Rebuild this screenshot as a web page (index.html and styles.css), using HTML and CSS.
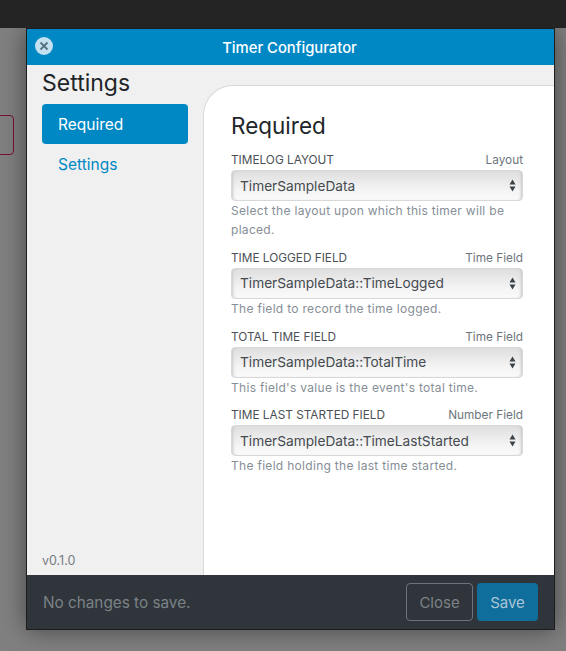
FILE: index.html
```html
<!DOCTYPE html>
<html>
    <head>
        <meta charset="UTF-8">
        <title>Timer Configurator</title>
        <link rel="stylesheet" href="styles.css">
    </head>
    <body>
        <div class="top-bar"></div>
        <div class="stage">
            <div class="ghost-button"></div>
            <div class="modal">
                <div class="modal-header">
                    <button class="close-x" aria-label="Close">
                        <svg width="10" height="10" viewBox="0 0 10 10"><path d="M1.5 1.5l7 7M8.5 1.5l-7 7" stroke="#55707f" stroke-width="1.8" fill="none"/></svg>
                    </button>
                    <span class="modal-title">Timer Configurator</span>
                </div>
                <div class="modal-body">
                    <div class="sidebar">
                        <h2>Settings</h2>
                        <a class="nav-item active">Required</a>
                        <a class="nav-item">Settings</a>
                        <div class="version">v0.1.0</div>
                    </div>
                    <div class="content">
                        <h3>Required</h3>

                        <div class="field">
                            <div class="field-label"><span>TIMELOG LAYOUT</span><span class="field-type">Layout</span></div>
                            <div class="select">TimerSampleData<svg class="arrows" width="7" height="13" viewBox="0 0 7 13"><path d="M3.5 0.5L6.5 5.5H0.5zM3.5 12.5L0.5 7.5H6.5z" fill="#3c4348"/></svg></div>
                            <div class="help">Select the layout upon which this timer will be placed.</div>
                        </div>

                        <div class="field">
                            <div class="field-label"><span>TIME LOGGED FIELD</span><span class="field-type">Time Field</span></div>
                            <div class="select">TimerSampleData::TimeLogged<svg class="arrows" width="7" height="13" viewBox="0 0 7 13"><path d="M3.5 0.5L6.5 5.5H0.5zM3.5 12.5L0.5 7.5H6.5z" fill="#3c4348"/></svg></div>
                            <div class="help">The field to record the time logged.</div>
                        </div>

                        <div class="field">
                            <div class="field-label"><span>TOTAL TIME FIELD</span><span class="field-type">Time Field</span></div>
                            <div class="select">TimerSampleData::TotalTime<svg class="arrows" width="7" height="13" viewBox="0 0 7 13"><path d="M3.5 0.5L6.5 5.5H0.5zM3.5 12.5L0.5 7.5H6.5z" fill="#3c4348"/></svg></div>
                            <div class="help">This field's value is the event's total time.</div>
                        </div>

                        <div class="field">
                            <div class="field-label"><span>TIME LAST STARTED FIELD</span><span class="field-type">Number Field</span></div>
                            <div class="select">TimerSampleData::TimeLastStarted<svg class="arrows" width="7" height="13" viewBox="0 0 7 13"><path d="M3.5 0.5L6.5 5.5H0.5zM3.5 12.5L0.5 7.5H6.5z" fill="#3c4348"/></svg></div>
                            <div class="help">The field holding the last time started.</div>
                        </div>
                    </div>
                </div>
                <div class="modal-footer">
                    <span class="status">No changes to save.</span>
                    <button class="btn btn-close">Close</button>
                    <button class="btn btn-save">Save</button>
                </div>
            </div>
        </div>
    </body>
</html>
```

FILE: styles.css
```css
html {
    width: 100%;
    height: 100%;
}

body {
    margin: 0;
    height: 651px;
    overflow: hidden;
    font-family: "Inter", "Liberation Sans", sans-serif;
    background: #808080;
    display: flex;
    flex-direction: column;
}

.top-bar {
    height: 28px;
    flex: none;
    background: #242424;
    position: relative;
    z-index: 1;
}

.stage {
    position: relative;
    flex: 1;
    padding: 1px 12px 0 27px;
}

.ghost-button {
    position: absolute;
    left: -20px;
    top: 87px;
    width: 32px;
    height: 38px;
    border: 1px solid #7a0f3c;
    border-radius: 4px;
}

.modal {
    position: relative;
    width: 527px;
    height: 600px;
    display: flex;
    flex-direction: column;
    outline: 1px solid #1d1d1d;
    box-shadow: 0 0 24px rgba(0, 0, 0, 0.5);
}

.modal-header {
    height: 36px;
    flex: none;
    background: #0088c5;
    display: flex;
    align-items: center;
    justify-content: center;
    position: relative;
}

.close-x {
    position: absolute;
    left: 8px;
    top: 8px;
    width: 18px;
    height: 18px;
    border: none;
    border-radius: 50%;
    padding: 0;
    background: #c3e1f0;
    display: flex;
    align-items: center;
    justify-content: center;
}

.modal-title {
    color: white;
    font-size: 14.8px;
    font-weight: 500;
    margin: 1px 2px 0 0;
}

.modal-body {
    flex: 1;
    display: flex;
    background: #f0f0f0;
    min-height: 0;
}

.sidebar {
    width: 161px;
    flex: none;
    padding: 0 0 0 15px;
    display: flex;
    flex-direction: column;
}

.sidebar h2 {
    margin: 6px 0 8px;
    font-size: 23px;
    line-height: 25px;
    font-weight: 400;
    color: #212529;
}

.nav-item {
    width: 146px;
    height: 40px;
    box-sizing: border-box;
    padding-left: 16px;
    display: flex;
    align-items: center;
    font-size: 15.5px;
    color: #0088c5;
    border-radius: 4px;
}

.nav-item.active {
    background: #0088c5;
    color: white;
}

.version {
    margin-top: auto;
    margin-bottom: 7px;
    font-size: 12.5px;
    color: #757b80;
}

.content {
    flex: 1;
    background: white;
    margin-top: 20px;
    border-top: 1px solid #d9d9d9;
    border-left: 1px solid #d9d9d9;
    border-top-left-radius: 30px;
    padding: 26px 31px 0 27px;
}

.content h3 {
    margin: 0 0 13px;
    font-size: 22.5px;
    line-height: 28px;
    font-weight: 400;
    color: #212529;
}

.field {
    margin-bottom: 11.8px;
}

.field-label {
    display: flex;
    justify-content: space-between;
    font-size: 11.8px;
    line-height: 14px;
    color: #4a5055;
    margin-bottom: 3px;
}

.field-type {
    color: #6c757d;
}

.select {
    height: 31px;
    box-sizing: border-box;
    border: 1px solid #d8d8d8;
    border-radius: 4px;
    background: linear-gradient(#dedede, #f4f4f4 65%, #fafafa);
    box-shadow: inset 3px 0 3px -2px #c8c8c8, inset -3px 0 3px -2px #c8c8c8;
    display: flex;
    align-items: center;
    justify-content: space-between;
    padding: 0 6px 0 8px;
    font-size: 13.7px;
    color: #444a4f;
}

.help {
    font-size: 12px;
    line-height: 19px;
    letter-spacing: 0.3px;
    color: #868e96;
}

.modal-footer {
    height: 54px;
    flex: none;
    background: #2f353a;
    display: flex;
    align-items: center;
    padding: 0 16px;
    gap: 4px;
}

.status {
    flex: 1;
    font-size: 15.3px;
    color: #7c8287;
}

.btn {
    height: 38px;
    border-radius: 4px;
    font-family: inherit;
    font-size: 15px;
    padding: 0;
}

.btn-close {
    width: 67px;
    background: none;
    border: 1px solid #6c757d;
    color: #7c8287;
}

.btn-save {
    width: 61px;
    border: none;
    background: #0f6e9b;
    color: #a9c6d6;
}
```
